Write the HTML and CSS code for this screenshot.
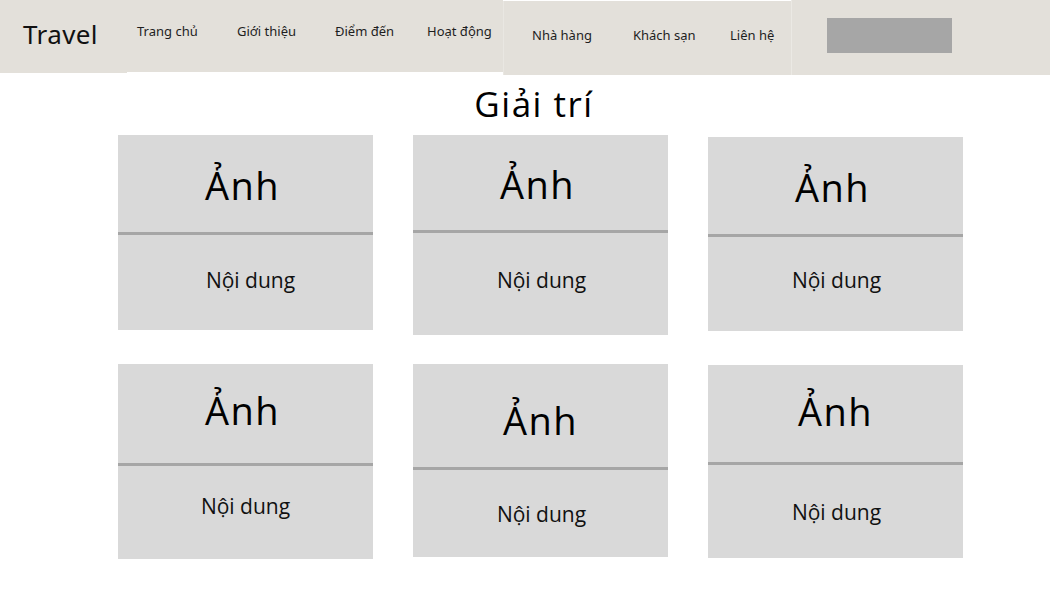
FILE: index.html
```html
<!DOCTYPE html>
<html lang="vi">
<head>
<meta charset="utf-8">
<title>Travel - Giải trí</title>
<link rel="stylesheet" href="styles.css">
</head>
<body>
<header class="topbar">
  <div class="seg seg-logo"><span class="logo">Travel</span></div>
  <nav class="seg seg-main">
    <a class="nav-link" href="#">Trang chủ</a>
    <a class="nav-link" href="#">Giới thiệu</a>
    <a class="nav-link" href="#">Điểm đến</a>
    <a class="nav-link" href="#">Hoạt động</a>
  </nav>
  <div class="seg seg-food"><a class="nav-link" href="#">Nhà hàng</a></div>
  <div class="seg seg-stay">
    <a class="nav-link nav-hotel" href="#">Khách sạn</a>
    <a class="nav-link" href="#">Liên hệ</a>
  </div>
  <div class="seg seg-search"><div class="search-box"></div></div>
</header>

<main class="content">
  <h1 class="title">Giải trí</h1>
  <section class="grid">
    <article class="card">
      <div class="card-img">Ảnh</div>
      <div class="card-line"></div>
      <div class="card-body">Nội dung</div>
    </article>
    <article class="card card--tall">
      <div class="card-img card-img--short">Ảnh</div>
      <div class="card-line"></div>
      <div class="card-body card-body--lift">Nội dung</div>
    </article>
    <article class="card card--drop">
      <div class="card-img">Ảnh</div>
      <div class="card-line"></div>
      <div class="card-body card-body--lift">Nội dung</div>
    </article>
    <article class="card">
      <div class="card-img card-img--high">Ảnh</div>
      <div class="card-line"></div>
      <div class="card-body card-body--high">Nội dung</div>
    </article>
    <article class="card card--short">
      <div class="card-img card-img--deep">Ảnh</div>
      <div class="card-line"></div>
      <div class="card-body card-body--low">Nội dung</div>
    </article>
    <article class="card card--short card--nudge">
      <div class="card-img card-img--up">Ảnh</div>
      <div class="card-line"></div>
      <div class="card-body card-body--low">Nội dung</div>
    </article>
  </section>
</main>
</body>
</html>
```

FILE: styles.css
```css
* {
  box-sizing: border-box;
}

html, body {
  margin: 0;
  padding: 0;
  background: #ffffff;
}

body {
  width: 1050px;
  height: 600px;
  overflow: hidden;
  font-family: "Open Sans", "Noto Sans", sans-serif;
  color: #000;
}

/* ---------- top bar ---------- */
.topbar {
  display: flex;
  align-items: flex-start;
  height: 75px;
}

.seg {
  display: flex;
  align-items: center;
  background: #e3e0da;
  flex: none;
}

.seg-logo {
  width: 127px;
  height: 73px;
  padding-left: 23px;
  padding-bottom: 5px;
}

.logo {
  font-family: "Noto Sans", sans-serif;
  font-size: 26px;
  color: #111;
  letter-spacing: 0.4px;
}

.nav-link {
  font-family: "Noto Sans", sans-serif;
  font-size: 13px;
  color: #1e1e1e;
  text-decoration: none;
  white-space: nowrap;
}

.seg-main {
  display: grid;
  grid-template-columns: 100px 98px 92px auto;
  align-items: center;
  width: 376px;
  height: 72px;
  padding-left: 10px;
  padding-bottom: 10px;
}

.seg-food {
  width: 109px;
  height: 74px;
  margin-top: 1px;
  padding-left: 28px;
  padding-bottom: 7px;
  border-left: 1px solid #e9e7e2;
}

.seg-stay {
  width: 179px;
  height: 74px;
  margin-top: 1px;
  padding-left: 21px;
  padding-bottom: 7px;
}

.nav-hotel {
  width: 97px;
}

.seg-search {
  flex: 1;
  height: 75px;
  align-items: flex-start;
  padding-left: 35px;
  padding-top: 18px;
  border-left: 1px solid #ebe9e4;
}

.search-box {
  width: 125px;
  height: 35px;
  background: #a6a6a6;
}

/* ---------- content ---------- */
.content {
  width: 964px;
  padding-left: 118px;
}

.title {
  margin: 9px 0 0;
  padding-right: 14px;
  text-align: center;
  font-family: "Open Sans", sans-serif;
  font-weight: 400;
  font-size: 35px;
  line-height: 40px;
  letter-spacing: 1.5px;
  color: #000;
}

.grid {
  display: grid;
  grid-template-columns: repeat(3, 255px);
  column-gap: 40px;
  row-gap: 29px;
  align-items: start;
  margin-top: 11px;
}

.card {
  display: flex;
  flex-direction: column;
  height: 195px;
  background: #d9d9d9;
}

.card--tall {
  height: 200px;
}

.card--drop {
  margin-top: 2px;
  height: 194px;
}

.card--short {
  height: 193px;
}

.card--nudge {
  margin-top: 1px;
}

.card-img {
  display: flex;
  align-items: center;
  justify-content: center;
  height: 97px;
  padding-top: 3px;
  padding-right: 6px;
  font-size: 38px;
  letter-spacing: 1.5px;
  color: #000;
}

.card-img--short {
  height: 95px;
}

.card-img--high {
  height: 99px;
  padding-top: 0;
  padding-bottom: 8px;
}

.card-img--deep {
  height: 103px;
  padding-top: 8px;
  padding-right: 0;
}

.card-img--up {
  height: 97px;
  padding-top: 0;
  padding-bottom: 6px;
  padding-right: 0;
}

.card-line {
  height: 3px;
  background: #a6a6a6;
  flex: none;
}

.card-body {
  flex: 1;
  display: flex;
  align-items: center;
  justify-content: center;
  padding-bottom: 6px;
  padding-left: 10px;
  font-size: 21px;
  color: #111;
}

.card-body--lift {
  padding-bottom: 9px;
  padding-left: 2px;
}

.card-body--high {
  padding-bottom: 14px;
  padding-left: 0;
}

.card-body--low {
  padding-bottom: 0;
  padding-left: 2px;
}
```
